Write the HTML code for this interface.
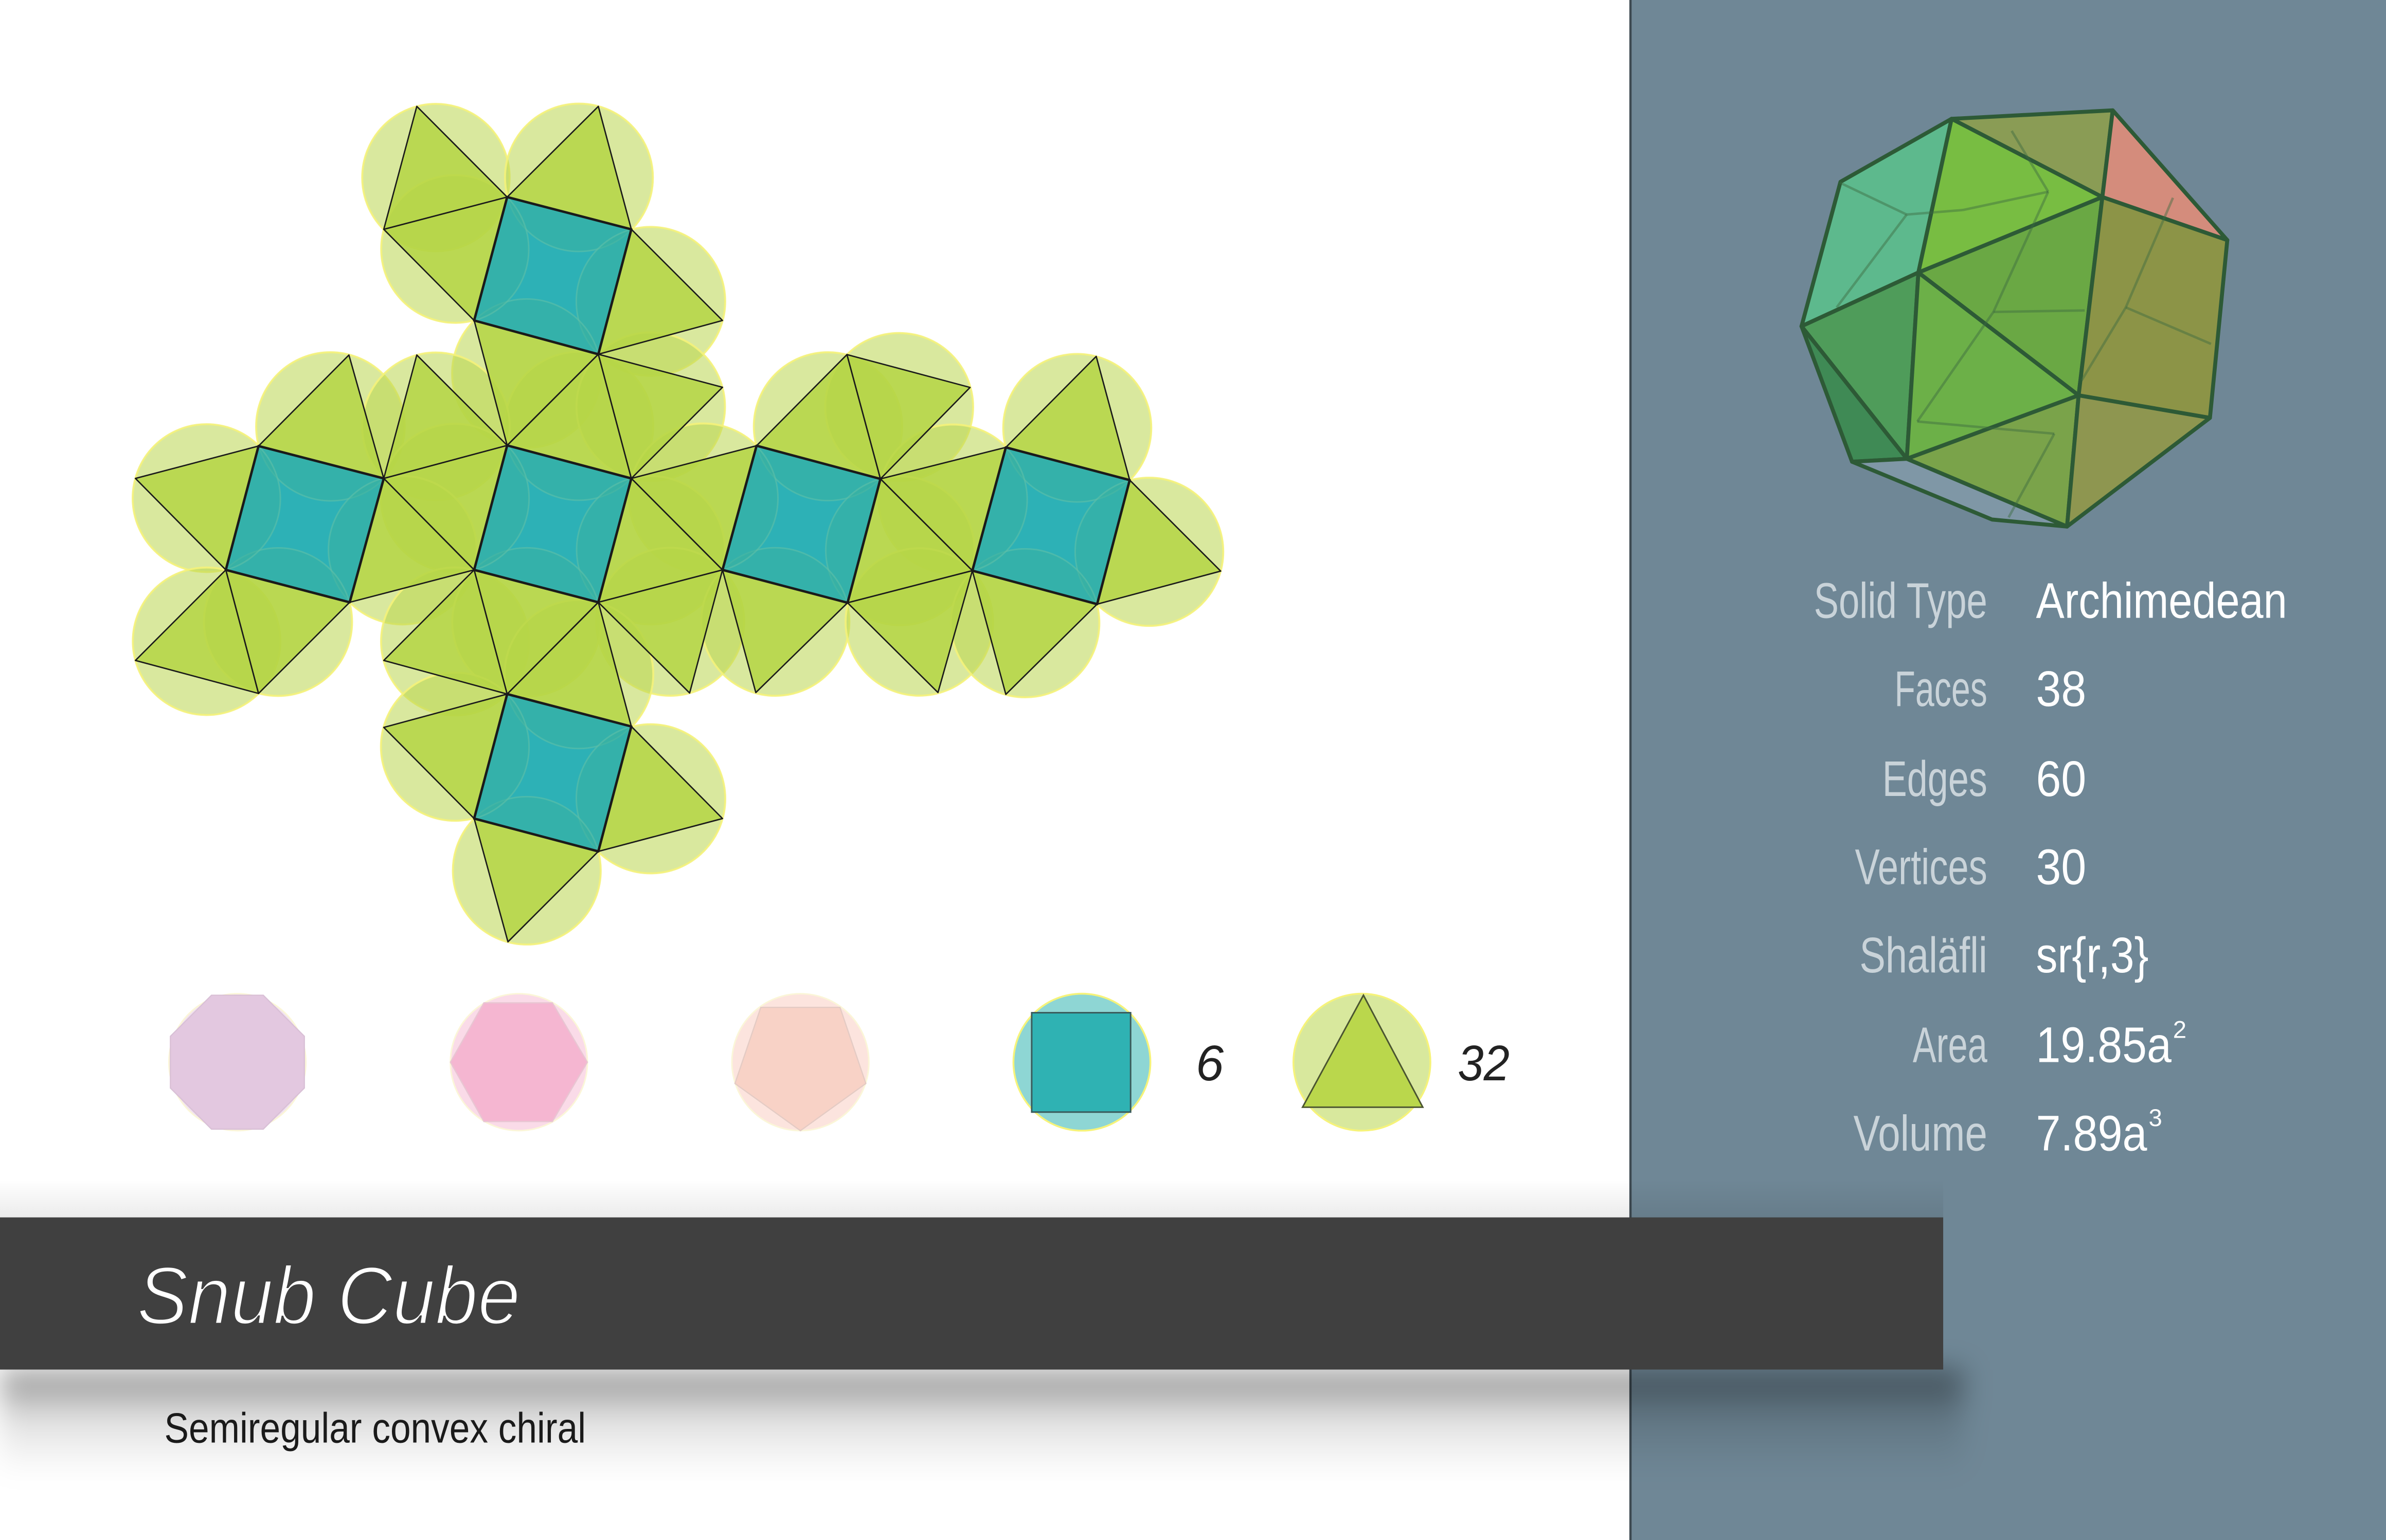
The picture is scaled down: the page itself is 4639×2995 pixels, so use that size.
<!DOCTYPE html>
<html><head><meta charset="utf-8"><style>
html,body{margin:0;padding:0;background:#fff;}
svg{display:block;}
</style></head><body>
<svg id="s" xmlns="http://www.w3.org/2000/svg" width="4639" height="2995" viewBox="0 0 1568 1012" preserveAspectRatio="none">
<defs>
<linearGradient id="shT" x1="0" y1="0" x2="0" y2="1"><stop offset="0" stop-color="#000" stop-opacity="0"/><stop offset="1" stop-color="#000" stop-opacity="0.08"/></linearGradient>
<linearGradient id="shB" x1="0" y1="0" x2="0" y2="1"><stop offset="0" stop-color="#000" stop-opacity="0.45"/><stop offset="0.45" stop-color="#000" stop-opacity="0.12"/><stop offset="1" stop-color="#000" stop-opacity="0"/></linearGradient>
<filter id="bl" x="-10%" y="-50%" width="120%" height="200%"><feGaussianBlur stdDeviation="9"/></filter>
<clipPath id="sqc"></clipPath>
</defs>
<rect x="0" y="0" width="1568" height="1012" fill="#fff"/>
<rect x="1071" y="0" width="497" height="1012" fill="#6f8796"/>
<line x1="1071.5" y1="0" x2="1071.5" y2="1012" stroke="#3e4a52" stroke-width="1.5"/>
<g id="net"></g>

<!-- legend -->
<g>
<circle cx="156" cy="698" r="45" fill="#f1e2ef" stroke="#fbf6d8" stroke-width="1"/>
<polygon points="139,654 173,654 200,681 200,715 173,742 139,742 112,715 112,681" fill="#e3c8e0" stroke="#d9c0d6" stroke-width="0.8"/>
<circle cx="341" cy="698" r="45" fill="#fadbe8" stroke="#fbf6d8" stroke-width="1"/>
<polygon points="318,659 363,659 386,698 363,737 318,737 296,698" fill="#f5b6d1" stroke="#e8c6d2" stroke-width="0.8"/>
<circle cx="526" cy="698" r="45" fill="#fce4de" stroke="#fbf6d8" stroke-width="1"/>
<polygon points="500,662 552,662 569,712 526,743 483,712" fill="#f8d2c6" stroke="#e4cbc4" stroke-width="0.8"/>
<circle cx="711" cy="698" r="45" fill="#8ed6d4" stroke="#f6f37a" stroke-width="1.2"/>
<rect x="678" y="665.5" width="65" height="65.3" fill="#2fb2b3" stroke="#3a5a5a" stroke-width="1"/>
<text x="795" y="710" font-family="Liberation Sans, sans-serif" font-style="italic" font-size="33" fill="#222" text-anchor="middle">6</text>
<circle cx="895" cy="698" r="45" fill="#d8e89d" stroke="#f6f37a" stroke-width="1.2"/>
<polygon points="896,654 935,727.6 856,727.6" fill="#bad74c" stroke="#4a5430" stroke-width="1"/>
<text x="975" y="710" font-family="Liberation Sans, sans-serif" font-style="italic" font-size="33" fill="#222" text-anchor="middle" textLength="34" lengthAdjust="spacingAndGlyphs">32</text>
</g>

<!-- shadow and bar -->
<rect x="0" y="775" width="1277" height="26" fill="url(#shT)"/>
<rect x="0" y="900" width="1290" height="70" fill="url(#shB)" filter="url(#bl)"/>
<rect x="0" y="800" width="1277" height="100" fill="#404040"/>
<text x="90" y="870" font-family="Liberation Sans, sans-serif" font-style="italic" font-size="54" fill="#fff" textLength="252" lengthAdjust="spacingAndGlyphs" stroke="#404040" stroke-width="1.4" paint-order="normal">Snub Cube</text>
<text x="108" y="948" font-family="Liberation Sans, sans-serif" font-size="28" fill="#1a1a1a" textLength="277" lengthAdjust="spacingAndGlyphs">Semiregular convex chiral</text>

<!-- polyhedron -->
<g stroke="#2d5a36" stroke-width="2.6" stroke-linejoin="round">
<polygon points="1209.5,119.5 1282.5,78.1 1260.7,179.1 1183.9,214.4" fill="#5db98d"/>
<polygon points="1282.5,78.1 1388.4,72.5 1381.6,129.5" fill="#8a9c55"/>
<polygon points="1388.4,72.5 1463.7,157.8 1381.6,129.5" fill="#d48c7c"/>
<polygon points="1282.5,78.1 1381.6,129.5 1260.7,179.1" fill="#78bd42"/>
<polygon points="1260.7,179.1 1381.6,129.5 1366,259.8" fill="#6aa844"/>
<polygon points="1381.6,129.5 1463.7,157.8 1452.3,274.6 1366,259.8" fill="#8c9447"/>
<polygon points="1183.9,214.4 1260.7,179.1 1253.1,301.5" fill="#4f9c5a"/>
<polygon points="1183.9,214.4 1253.1,301.5 1217.1,303.4" fill="#3f8a55"/>
<polygon points="1260.7,179.1 1366,259.8 1253.1,301.5" fill="#6cb048"/>
<polygon points="1253.1,301.5 1366,259.8 1358.4,346" fill="#7aa34a"/>
<polygon points="1366,259.8 1452.3,274.6 1358.4,346" fill="#8e9650"/>
<polygon points="1217.1,303.4 1253.1,301.5 1358.4,346 1309.1,341.4" fill="#7f97a6"/>
</g>
<g stroke="#3c6a40" stroke-width="1.6" stroke-opacity="0.45" fill="none">
<line x1="1253" y1="141" x2="1209" y2="120"/><line x1="1253" y1="141" x2="1207" y2="202"/><line x1="1253" y1="141" x2="1290" y2="138"/><line x1="1290" y1="138" x2="1346" y2="126"/><line x1="1346" y1="126" x2="1322" y2="86"/><line x1="1346" y1="126" x2="1310" y2="205"/><line x1="1310" y1="205" x2="1370" y2="204"/><line x1="1310" y1="205" x2="1260" y2="277"/><line x1="1260" y1="277" x2="1350" y2="285"/><line x1="1397" y1="202" x2="1428" y2="130"/><line x1="1397" y1="202" x2="1453" y2="226"/><line x1="1397" y1="202" x2="1368" y2="250"/><line x1="1350" y1="285" x2="1320" y2="340"/>
</g>

<!-- stats -->
<g font-family="Liberation Sans, sans-serif" font-size="33">
<g fill="#c9d3d9" text-anchor="end">
<text x="1306" y="406" textLength="114" lengthAdjust="spacingAndGlyphs">Solid Type</text>
<text x="1306" y="464" textLength="61" lengthAdjust="spacingAndGlyphs">Faces</text>
<text x="1306" y="523" textLength="69" lengthAdjust="spacingAndGlyphs">Edges</text>
<text x="1306" y="581" textLength="87" lengthAdjust="spacingAndGlyphs">Vertices</text>
<text x="1306" y="639" textLength="84" lengthAdjust="spacingAndGlyphs">Shaläfli</text>
<text x="1306" y="698" textLength="49" lengthAdjust="spacingAndGlyphs">Area</text>
<text x="1306" y="756" textLength="88" lengthAdjust="spacingAndGlyphs">Volume</text>
</g>
<g fill="#fff">
<text x="1338" y="406" textLength="165" lengthAdjust="spacingAndGlyphs">Archimedean</text>
<text x="1338" y="464" textLength="33" lengthAdjust="spacingAndGlyphs">38</text>
<text x="1338" y="523" textLength="33" lengthAdjust="spacingAndGlyphs">60</text>
<text x="1338" y="581" textLength="33" lengthAdjust="spacingAndGlyphs">30</text>
<text x="1338" y="639" textLength="74" lengthAdjust="spacingAndGlyphs">sr{r,3}</text>
<text x="1338" y="698" textLength="89" lengthAdjust="spacingAndGlyphs">19.85a</text><text x="1428" y="682" font-size="16">2</text>
<text x="1338" y="756" textLength="73" lengthAdjust="spacingAndGlyphs">7.89a</text><text x="1412" y="740" font-size="16">3</text>
</g>
</g>
</svg>
<script>
var P={A:[273.9,69.9],B:[333.3,129.5],C:[393.2,69.9],D:[252.2,150.7],E:[414.9,150.7],F:[311.6,210.6],G:[393.2,232.8],H:[474.8,210.6],I:[474.8,254.5],J:[333.3,292.7],K:[414.9,314.4],L:[229.3,233.3],M:[273.9,233.3],N:[252.2,314.4],O:[169.9,293.1],Pp:[89,314.4],Q:[148.4,374.5],R:[229.8,395.8],S:[311.6,374.5],T:[393.2,395.8],U:[474.8,374.5],V:[89,434],W:[169.9,455.7],X:[252.2,434],Y:[333.3,456.1],Z:[414.9,477.4],a:[252.2,478],b:[311.6,537.9],c:[393.2,559.5],d:[474.8,537.9],e:[333.8,618.9],f:[453.2,455.4],
TL3:[497.2,292.9],TR3:[578.6,314.7],BR3:[557,396.1],g:[556.6,233],h:[637.5,254.6],TL4:[661,294],TR4:[742.4,315.5],BR4:[721,397],BL4:[639,375],i:[720.4,234.2],j:[802.2,375.3],k:[496.7,455.1],l:[616.4,455.1],m:[661,456.3]};
var tris=[["A","B","D"],["B","C","E"],["D","B","F"],["E","H","G"],["F","G","J"],["G","J","K"],["G","I","K"],["L","O","N"],["M","N","J"],["N","J","S"],["N","R","S"],["Pp","O","Q"],["K","TL3","U"],["K","U","T"],["T","U","f"],["Q","V","W"],["Q","W","R"],["S","X","Y"],["S","T","Y"],["T","Y","Z"],["Y","a","b"],["Z","d","c"],["b","c","e"],["TL3","g","TR3"],["g","h","TR3"],["TR3","TL4","BL4"],["TR3","BL4","BR3"],["U","k","BR3"],["BR3","l","BL4"],["BL4","m","BR4"],["TL4","i","TR4"],["TR4","j","BR4"]];
var sq=[["B","E","G","F"],["J","K","T","S"],["O","N","R","Q"],["TL3","TR3","BR3","U"],["TL4","TR4","BR4","BL4"],["Y","Z","c","b"]];
var NS="http://www.w3.org/2000/svg",g=document.getElementById("net");
function el(n,a,p){var e=document.createElementNS(NS,n);for(var k in a)e.setAttribute(k,a[k]);(p||g).appendChild(e);return e;}
function pts(a){return a.map(function(k){return P[k].join(",");}).join(" ");}
var circ=[];
tris.forEach(function(t){var cx=0,cy=0;t.forEach(function(k){cx+=P[k][0];cy+=P[k][1];});cx/=3;cy/=3;var r=0;t.forEach(function(k){r+=Math.hypot(P[k][0]-cx,P[k][1]-cy);});r/=3;circ.push([cx,cy,r]);
el("circle",{cx:cx,cy:cy,r:r,fill:"#b9d64e","fill-opacity":"0.55",stroke:"#f4f27a","stroke-width":"1.3","stroke-opacity":"0.9"});});
sq.forEach(function(s,idx){el("polygon",{points:pts(s),fill:"#2db1b6"});
 var cp=el("clipPath",{id:"c"+idx});el("polygon",{points:pts(s)},cp);
 var gg=el("g",{"clip-path":"url(#c"+idx+")"});
 for(var e=0;e<4;e++){var p1=P[s[e]],p2=P[s[(e+1)%4]];var mx=(p1[0]+p2[0])/2,my=(p1[1]+p2[1])/2;var cx=0,cy=0;s.forEach(function(k){cx+=P[k][0];cy+=P[k][1];});cx/=4;cy/=4;
  var dx=mx-cx,dy=my-cy,L=Math.hypot(dx,dy);var side=Math.hypot(p2[0]-p1[0],p2[1]-p1[1]);var r=side/Math.sqrt(3);var d=side/(2*Math.sqrt(3));
  el("circle",{cx:mx+dx/L*d,cy:my+dy/L*d,r:r,fill:"#3bb0a0","fill-opacity":"0.55",stroke:"#5fbfa8","stroke-width":"1","stroke-opacity":"0.6"},gg);}
});
tris.forEach(function(t){el("polygon",{points:pts(t),fill:"#b4d544","fill-opacity":"0.85",stroke:"#1a1a1a","stroke-width":"0.9","stroke-linejoin":"round"});});
sq.forEach(function(s){el("polygon",{points:pts(s),fill:"none",stroke:"#1a1a1a","stroke-width":"1.6","stroke-linejoin":"round"});});
</script>
</body></html>
